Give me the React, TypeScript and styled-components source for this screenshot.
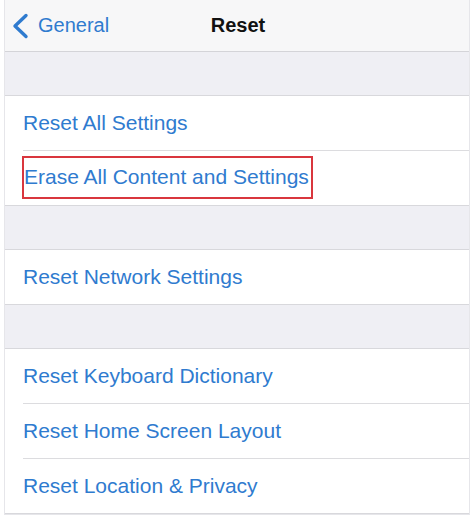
import styled, { createGlobalStyle } from 'styled-components';

const GlobalStyle = createGlobalStyle`
  html, body {
    margin: 0;
    padding: 0;
    background: #ffffff;
  }
  body {
    font-family: "Liberation Sans", Arial, sans-serif;
  }
`;

type Group = { items: string[] };

const groups: Group[] = [
    { items: ['Reset All Settings', 'Erase All Content and Settings'] },
    { items: ['Reset Network Settings'] },
    { items: ['Reset Keyboard Dictionary', 'Reset Home Screen Layout', 'Reset Location & Privacy'] },
];

const highlighted = 'Erase All Content and Settings';

export default function App() {
    return (
        <>
            <GlobalStyle />
            <Screen>
                <NavBar>
                    <BackButton>
                        <svg width="18" height="26" viewBox="0 0 18 26">
                            <path d="M15 2.5 L4 13 L15 23.5" fill="none" stroke="#2f7bcf" strokeWidth="3.4" strokeLinecap="round" strokeLinejoin="round" />
                        </svg>
                        <BackLabel>General</BackLabel>
                    </BackButton>
                    <Title>Reset</Title>
                </NavBar>
                {groups.map((group, gi) => (
                    <div key={gi}>
                        <Spacer />
                        <Section>
                            {group.items.map((item, i) => (
                                <Row key={item} $last={i === group.items.length - 1}>
                                    <Label $boxed={item === highlighted}>{item}</Label>
                                </Row>
                            ))}
                        </Section>
                    </div>
                ))}
            </Screen>
        </>
    );
}

const Screen = styled.div`
    margin: 0 4px;
    height: 514px;
    background: #efeff4;
    border-left: 1px solid #e6e6ea;
    border-right: 1px solid #e6e6ea;
    border-bottom: 1px solid #e6e6ea;
    overflow: hidden;
`;

const NavBar = styled.div`
    position: relative;
    height: 51px;
    background: #f7f7f8;
    border-bottom: 1px solid #d4d4d8;
    display: flex;
    align-items: center;
    justify-content: center;
`;

const BackButton = styled.div`
    position: absolute;
    left: 6px;
    top: 0;
    height: 100%;
    display: flex;
    align-items: center;
    gap: 9px;
`;

const BackLabel = styled.span`
    color: #2f7bcf;
    font-size: 20px;
`;

const Title = styled.span`
    color: #111;
    font-size: 20px;
    font-weight: bold;
    margin-left: 2px;
`;

const Spacer = styled.div`
    height: 43px;
`;

const Section = styled.div`
    background: #ffffff;
    border-top: 1px solid #d8d8dc;
    border-bottom: 1px solid #d8d8dc;
    padding-left: 18px;
`;

const Row = styled.div<{ $last: boolean }>`
    height: 54px;
    display: flex;
    align-items: center;
    border-bottom: ${p => (p.$last ? 'none' : '1px solid #dcdcdf')};
`;

const Label = styled.span<{ $boxed: boolean }>`
    color: #2f7bcf;
    font-size: 21px;
    padding: ${p => (p.$boxed ? '7px 2px 8px 0' : '0')};
    margin-left: ${p => (p.$boxed ? '-1px' : '0')};
    margin-top: ${p => (p.$boxed ? '-2px' : '0')};
    border: ${p => (p.$boxed ? '2px solid #d9363e' : 'none')};
`;
